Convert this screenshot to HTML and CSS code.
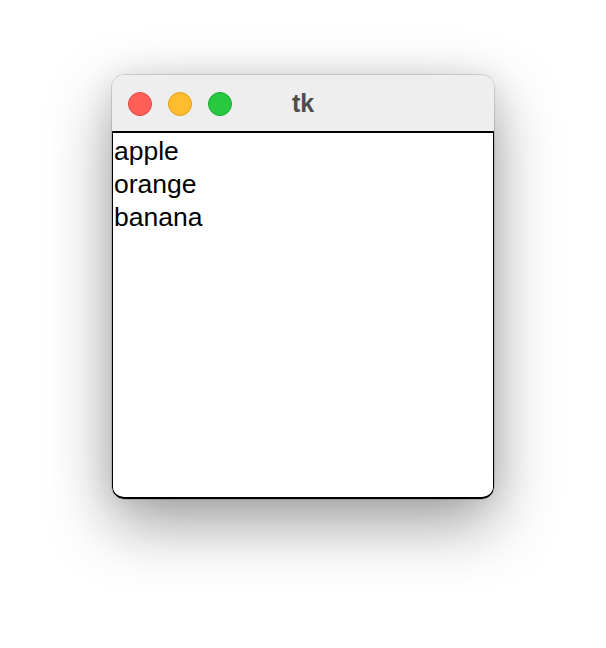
FILE: index.html
```html
<!DOCTYPE html>
<html>
<head>
<meta charset="utf-8">
<link rel="stylesheet" href="styles.css">
</head>
<body>
<div class="window">
  <div class="titlebar">
    <div class="lights">
      <span class="light close"></span>
      <span class="light minimize"></span>
      <span class="light zoom"></span>
    </div>
    <div class="title">tk</div>
    <div class="spacer"></div>
  </div>
  <div class="listbox">
    <div class="item">apple</div>
    <div class="item">orange</div>
    <div class="item">banana</div>
  </div>
</div>
</body>
</html>
```

FILE: styles.css
```css
html, body {
  margin: 0;
  padding: 0;
  background: #ffffff;
}
body {
  width: 606px;
  height: 648px;
  overflow: hidden;
  padding-top: 75px;
  box-sizing: border-box;
  font-family: "Liberation Sans", Arial, sans-serif;
}
.window {
  width: 382px;
  height: 424px;
  margin: 0 auto;
  border-radius: 12px;
  overflow: hidden;
  display: flex;
  flex-direction: column;
  background: #eeeeee;
  box-shadow: 0 0 0 0.5px rgba(0,0,0,0.25), 0 24px 64px rgba(0,0,0,0.38), 0 0 30px rgba(0,0,0,0.08);
}
.titlebar {
  height: 56px;
  flex: 0 0 56px;
  display: grid;
  grid-template-columns: 1fr auto 1fr;
  align-items: center;
  background: #eeeeee;
}
.lights {
  display: flex;
  gap: 16px;
  padding-left: 16px;
  padding-top: 2px;
}
.light {
  width: 24px;
  height: 24px;
  border-radius: 50%;
  box-sizing: border-box;
}
.close { background: #ff5f57; border: 1px solid #e2463f; }
.minimize { background: #febc2e; border: 1px solid #e1a116; }
.zoom { background: #28c840; border: 1px solid #17ad2c; }
.title {
  font-weight: bold;
  font-size: 25px;
  color: #4d4d4d;
  padding-top: 1px;
}
.listbox {
  flex: 1;
  background: #ffffff;
  border-top: 2px solid #000000;
  border-left: 1.5px solid #000000;
  border-right: 1.5px solid #000000;
  border-bottom: 2px solid #000000;
  border-radius: 0 0 12px 12px;
  padding-top: 2px;
  padding-left: 1px;
}
.item {
  font-size: 26.5px;
  line-height: 33px;
  color: #000000;
  height: 33px;
}
```
